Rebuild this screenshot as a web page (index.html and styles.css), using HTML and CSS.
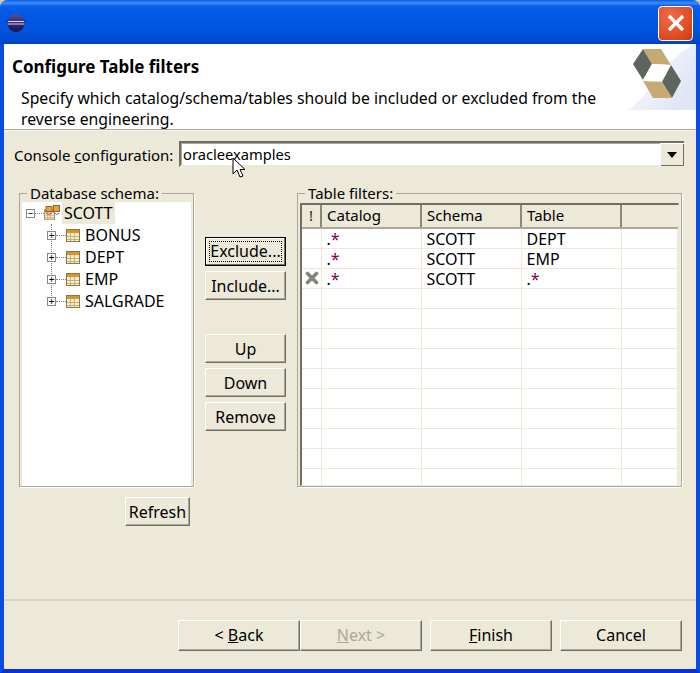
FILE: index.html
```html
<!DOCTYPE html>
<html lang="en">
<head>
    <meta charset="UTF-8">
    <title>Configure Table filters</title>
    <link rel="stylesheet" href="styles.css">
</head>
<body>
    <svg class="sprites" width="0" height="0">
        <symbol id="tableIcon" viewBox="0 0 14 13">
            <rect x="0.5" y="0.5" width="13" height="12" fill="#f6eecb" stroke="#8a7a4a"/>
            <rect x="1" y="1" width="12" height="3" fill="#e0922a"/>
            <path d="M1 7.5h12M1 10.5h12M4.5 4v8M8.5 4v8" stroke="#c2b282" fill="none"/>
        </symbol>
    </svg>
    <div class="window">
        <!-- title bar -->
        <div class="titlebar">
            <svg class="app-icon" width="18" height="18" viewBox="0 0 18 18">
                <defs>
                    <linearGradient id="sphere" x1="0" y1="0" x2="0" y2="1">
                        <stop offset="0" stop-color="#5a4f9c"/>
                        <stop offset="0.5" stop-color="#2c2a6e"/>
                        <stop offset="1" stop-color="#1c1a50"/>
                    </linearGradient>
                </defs>
                <circle cx="9" cy="9" r="9" fill="url(#sphere)"/>
                <path d="M1 7.5h16M0.5 10h17" stroke="#d8d4f0" stroke-width="1" fill="none"/>
            </svg>
            <div class="close-btn">
                <svg width="18" height="18" viewBox="0 0 18 18">
                    <path d="M2 2L16 16M16 2L2 16" stroke="#fff" stroke-width="3.4" fill="none"/>
                </svg>
            </div>
        </div>

        <!-- wizard header -->
        <div class="header">
            <div class="header-text">
                <div class="header-title">Configure Table filters</div>
                <div class="header-desc">Specify which catalog/schema/tables should be included or excluded from the reverse engineering.</div>
            </div>
            <svg class="header-logo" width="70" height="66" viewBox="626 44 70 66">
                <defs>
                    <linearGradient id="logoBg" x1="0" y1="0" x2="1" y2="0.6">
                        <stop offset="0" stop-color="#fff"/>
                        <stop offset="1" stop-color="#dfe5f5"/>
                    </linearGradient>
                </defs>
                <path d="M626 110C650 100 660 60 696 44V110Z" fill="url(#logoBg)"/>
                <path d="M643 49L661 49L671 65L652 64Z" fill="#c6aa74"/>
                <path d="M643 49L652 64L643 80L633 64Z" fill="#5d665d"/>
                <path d="M652 64L671 65L662 81L643 80Z" fill="#fff"/>
                <path d="M671 65L681 81L672 98L662 82Z" fill="#5d665d"/>
                <path d="M643 81L662 82L672 98L653 98Z" fill="#c6aa74"/>
            </svg>
        </div>

        <div class="content">
            <div class="console-row">
                <label class="console-label">Console <u>c</u>onfiguration:</label>
                <div class="combo">
                    <span class="combo-value">oracleexamples</span>
                    <span class="combo-arrow"></span>
                </div>
            </div>

            <div class="panels">
                <div class="left-col">
                    <fieldset class="group schema-group">
                        <legend>Database schema:</legend>
                        <div class="tree">
                            <div class="tree-row">
                                <span class="toggle root-toggle">&minus;</span>
                                <span class="dots root-dots"></span>
                                <svg class="schema-icon" width="16" height="16" viewBox="0 0 16 16">
                                    <use href="#tableIcon" x="0" y="4" width="11" height="11"/>
                                    <rect x="2" y="1.5" width="6" height="5" fill="#e8a040" stroke="#8a6a2a"/>
                                    <rect x="9.5" y="0.5" width="6" height="6" fill="#e8a040" stroke="#8a6a2a"/>
                                    <path d="M2 8q3 3 6 0" stroke="#d04050" fill="none"/>
                                    <path d="M10 8q3 3 5 0" stroke="#4060d0" fill="none"/>
                                </svg>
                                <span class="tree-label selected">SCOTT</span>
                            </div>
                            <div class="tree-row child">
                                <span class="toggle">+</span><span class="dots"></span>
                                <svg class="table-icon" width="14" height="13"><use href="#tableIcon"/></svg>
                                <span class="tree-label">BONUS</span>
                            </div>
                            <div class="tree-row child">
                                <span class="toggle">+</span><span class="dots"></span>
                                <svg class="table-icon" width="14" height="13"><use href="#tableIcon"/></svg>
                                <span class="tree-label">DEPT</span>
                            </div>
                            <div class="tree-row child">
                                <span class="toggle">+</span><span class="dots"></span>
                                <svg class="table-icon" width="14" height="13"><use href="#tableIcon"/></svg>
                                <span class="tree-label">EMP</span>
                            </div>
                            <div class="tree-row child">
                                <span class="toggle">+</span><span class="dots"></span>
                                <svg class="table-icon" width="14" height="13"><use href="#tableIcon"/></svg>
                                <span class="tree-label">SALGRADE</span>
                            </div>
                        </div>
                    </fieldset>
                    <button class="btn refresh-btn" type="button">Refresh</button>
                </div>

                <div class="actions">
                    <button class="btn btn-default" type="button"><span>Exclude...</span></button>
                    <button class="btn" type="button">Include...</button>
                    <button class="btn gap-top" type="button">Up</button>
                    <button class="btn" type="button">Down</button>
                    <button class="btn" type="button">Remove</button>
                </div>

                <fieldset class="group filters-group">
                    <legend>Table filters:</legend>
                    <div class="table-wrap">
                        <table class="filters">
                            <colgroup>
                                <col class="col-flag"><col class="col-std"><col class="col-std"><col class="col-std"><col>
                            </colgroup>
                            <thead>
                                <tr><th class="flag-head">!</th><th>Catalog</th><th>Schema</th><th>Table</th><th></th></tr>
                            </thead>
                            <tbody>
                                <tr><td></td><td>.<span class="star">*</span></td><td>SCOTT</td><td>DEPT</td><td></td></tr>
                                <tr><td></td><td>.<span class="star">*</span></td><td>SCOTT</td><td>EMP</td><td></td></tr>
                                <tr>
                                    <td class="flag-cell">
                                        <svg width="14" height="14" viewBox="0 0 14 14">
                                            <path d="M2.5 2.5L11.5 11.5M11.5 2.5L2.5 11.5" stroke="#85857f" stroke-width="3.6" stroke-linecap="round" fill="none"/>
                                        </svg>
                                    </td>
                                    <td>.<span class="star">*</span></td><td>SCOTT</td><td>.<span class="star">*</span></td><td></td>
                                </tr>
                                <tr><td></td><td></td><td></td><td></td><td></td></tr>
                                <tr><td></td><td></td><td></td><td></td><td></td></tr>
                                <tr><td></td><td></td><td></td><td></td><td></td></tr>
                                <tr><td></td><td></td><td></td><td></td><td></td></tr>
                                <tr><td></td><td></td><td></td><td></td><td></td></tr>
                                <tr><td></td><td></td><td></td><td></td><td></td></tr>
                                <tr><td></td><td></td><td></td><td></td><td></td></tr>
                                <tr><td></td><td></td><td></td><td></td><td></td></tr>
                                <tr><td></td><td></td><td></td><td></td><td></td></tr>
                                <tr class="last-row"><td></td><td></td><td></td><td></td><td></td></tr>
                            </tbody>
                        </table>
                    </div>
                </fieldset>
            </div>
        </div>

        <!-- wizard buttons -->
        <div class="footer">
            <div class="nav-pair">
                <button class="btn nav-btn" type="button">&lt; <u>B</u>ack</button>
                <button class="btn nav-btn" type="button" disabled><u>N</u>ext &gt;</button>
            </div>
            <button class="btn nav-btn" type="button"><u>F</u>inish</button>
            <button class="btn nav-btn" type="button">Cancel</button>
        </div>

        <!-- mouse pointer -->
        <svg class="cursor" width="14" height="22" viewBox="0 0 14 22">
            <path d="M1 1V17L5 13L8 20L11 19L8 12.5H13Z" fill="#fff" stroke="#000" stroke-width="1"/>
        </svg>
    </div>
</body>
</html>
```

FILE: styles.css
```css
/* page */
html, body {
    margin: 0;
    padding: 0;
    background-color: #cfcbb8;
}
body {
    width: 700px;
    height: 673px;
    overflow: hidden;
    font-family: "Noto Sans", "DejaVu Sans", sans-serif;
    font-size: 15px;
    color: #000;
}
.sprites {
    display: block;
    height: 0;
}
/* window frame */
.window {
    position: relative;
    box-sizing: border-box;
    width: 700px;
    height: 673px;
    display: flex;
    flex-direction: column;
    background-color: #ece9d8;
    border-left: 4px solid #0a4be0;
    border-right: 4px solid #0a4be0;
    border-bottom: 4px solid #0831d9;
    border-radius: 8px 8px 0 0;
}
.titlebar {
    height: 44px;
    flex: none;
    margin: 0 -4px;
    padding: 0 7px 0 7px;
    display: flex;
    align-items: center;
    justify-content: space-between;
    border-radius: 8px 8px 0 0;
    background: linear-gradient(to bottom, #0a58e8 0, #3d8ff5 3px, #0a5fe8 6px, #0058e4 16px, #0054e0 30px, #0048cc 42px, #0040b8 44px);
}
.app-icon {
    margin-top: 2px;
}
.close-btn {
    box-sizing: border-box;
    width: 35px;
    height: 35px;
    margin-top: 2px;
    display: flex;
    align-items: center;
    justify-content: center;
    border: 1px solid #fff;
    border-radius: 4px;
    background: radial-gradient(circle at 35% 30%, #ec6d4a 0, #e04f24 60%, #c83c12 100%);
}
/* header */
.header {
    height: 85px;
    flex: none;
    display: flex;
    background-color: #fff;
    border-bottom: 1px solid #aca899;
    box-sizing: content-box;
}
.header-text {
    flex: 1;
    padding: 0 0 0 8px;
}
.header-title {
    margin-top: 13px;
    font-weight: bold;
    font-size: 17px;
    line-height: 20px;
}
.header-desc {
    margin: 11px 0 0 9px;
    font-size: 15.75px;
    line-height: 21px;
}
.header-logo {
    flex: none;
}
/* body */
.content {
    flex: 1;
    padding: 10px 12px 0 10px;
    border-top: 1px solid #f7f5ec;
    border-bottom: 2px solid #d8d4c4;
    box-sizing: border-box;
}
.console-row {
    display: flex;
    align-items: center;
    height: 26px;
}
.console-label {
    width: 165px;
    flex: none;
    white-space: nowrap;
    padding-top: 1px;
}
.combo {
    box-sizing: border-box;
    width: 505px;
    height: 26px;
    display: flex;
    align-items: center;
    justify-content: space-between;
    background-color: #fff;
    border: 2px solid #ece9d8;
    border-right: none;
    border-top-color: #716f64;
    border-left-color: #716f64;
    box-shadow: inset 1px 1px 0 #aca899;
    padding-left: 2px;
}
.combo-value {
    font-size: 14.7px;
}
.combo-arrow {
    box-sizing: border-box;
    width: 24px;
    height: 23px;
    background-color: #ece9d8;
    box-shadow: inset 1px 1px 0 #fff, inset -1px -1px 0 #716f64;
    position: relative;
}
.combo-arrow::after {
    content: "";
    position: absolute;
    left: 7px;
    top: 9px;
    border-left: 5px solid transparent;
    border-right: 5px solid transparent;
    border-top: 6px solid #000;
}
.panels {
    display: flex;
    margin-top: 17px;
}
.left-col {
    width: 175px;
    margin-left: 5px;
    flex: none;
    display: flex;
    flex-direction: column;
}
fieldset.group {
    box-sizing: border-box;
    margin: 0;
    padding: 0 2px 2px 2px;
    height: 303px;
    border: 1px solid #aca899;
    box-shadow: 1px 1px 0 #fff;
}
.group legend {
    padding: 0 3px;
    margin-left: 5px;
    line-height: 18px;
}
/* tree */
.tree {
    position: relative;
    height: 284px;
    background-color: #fff;
}
.tree::before {
    content: "";
    position: absolute;
    left: 29px;
    top: 22px;
    height: 78px;
    border-left: 1px dotted #808080;
}
.tree-row {
    position: relative;
    height: 22px;
    display: flex;
    align-items: center;
    padding-left: 4px;
}
.tree-row.child {
    padding-left: 25px;
}
.toggle {
    box-sizing: border-box;
    width: 9px;
    height: 9px;
    flex: none;
    display: flex;
    align-items: center;
    justify-content: center;
    border: 1px solid #8a8a7a;
    background-color: #fff;
    font-size: 10px;
    line-height: 7px;
}
.dots {
    width: 10px;
    flex: none;
    border-top: 1px dotted #808080;
}
.root-dots {
    width: 9px;
}
.schema-icon {
    flex: none;
}
.table-icon {
    flex: none;
    margin-right: 5px;
}
.tree-label {
    font-size: 16px;
    line-height: 22px;
}
.tree-label.selected {
    background-color: #ece9d8;
    padding: 0 2px;
    margin-left: 2px;
}
/* buttons */
.btn {
    box-sizing: border-box;
    height: 29px;
    padding: 0;
    font-family: inherit;
    font-size: 16px;
    color: #000;
    background-color: #ece9d8;
    border: 1px solid;
    border-color: #fff #716f64 #716f64 #fff;
    box-shadow: inset -1px -1px 0 #aca899;
}
.btn:disabled {
    color: #aca899;
}
.refresh-btn {
    align-self: flex-end;
    width: 65px;
    margin: 10px 4px 0 0;
}
.actions {
    width: 81px;
    flex: none;
    margin: 53px 11px 0 11px;
    display: flex;
    flex-direction: column;
    gap: 5px;
}
.btn-default {
    border: 1px solid #000;
    box-shadow: inset -1px -1px 0 #716f64, inset 1px 1px 0 #fff;
    padding: 3px;
}
.btn-default span {
    display: block;
    height: 100%;
    line-height: 19px;
    border: 1px dotted #000;
    box-sizing: border-box;
}
.gap-top {
    margin-top: 29px;
}
/* filters table */
.filters-group {
    width: 384px;
    flex: none;
}
.table-wrap {
    box-sizing: border-box;
    height: 283px;
    margin-top: 1px;
    overflow: hidden;
    background-color: #fff;
    border-top: 2px solid #716f64;
    border-left: 2px solid #716f64;
    border-right: 1px solid #ece9d8;
    border-bottom: 1px solid #ece9d8;
}
.filters {
    width: 376px;
    table-layout: fixed;
    border-collapse: collapse;
}
.col-flag {
    width: 19px;
}
.col-std {
    width: 100px;
}
.filters th {
    height: 22px;
    padding: 0 0 2px 5px;
    font-weight: normal;
    text-align: left;
    background-color: #ece9d8;
    border-right: 2px solid #8a8878;
    border-bottom: 2px solid #aca899;
    box-sizing: border-box;
}
.filters th:last-child {
    border-right: none;
}
.filters th.flag-head {
    padding: 0 0 2px 0;
    text-align: center;
    color: #402000;
}
.filters td {
    height: 20px;
    box-sizing: border-box;
    padding: 2px 0 0 5px;
    vertical-align: top;
    border-right: 1px solid #ece9d8;
    border-bottom: 1px solid #ece9d8;
    font-size: 16px;
    line-height: 17px;
}
.filters td.flag-cell {
    padding: 2px 0 0 3px;
}
.flag-cell svg {
    display: block;
}
.star {
    color: #7f0055;
}
/* footer */
.footer {
    height: 68px;
    flex: none;
    box-sizing: border-box;
    display: flex;
    justify-content: flex-end;
    gap: 8px;
    padding: 19px 14px 0 0;
}
.nav-pair {
    display: flex;
}
.nav-btn {
    width: 122px;
    height: 31px;
    padding-bottom: 2px;
}
/* pointer over the combo */
.cursor {
    position: absolute;
    left: 228px;
    top: 157px;
}
```
